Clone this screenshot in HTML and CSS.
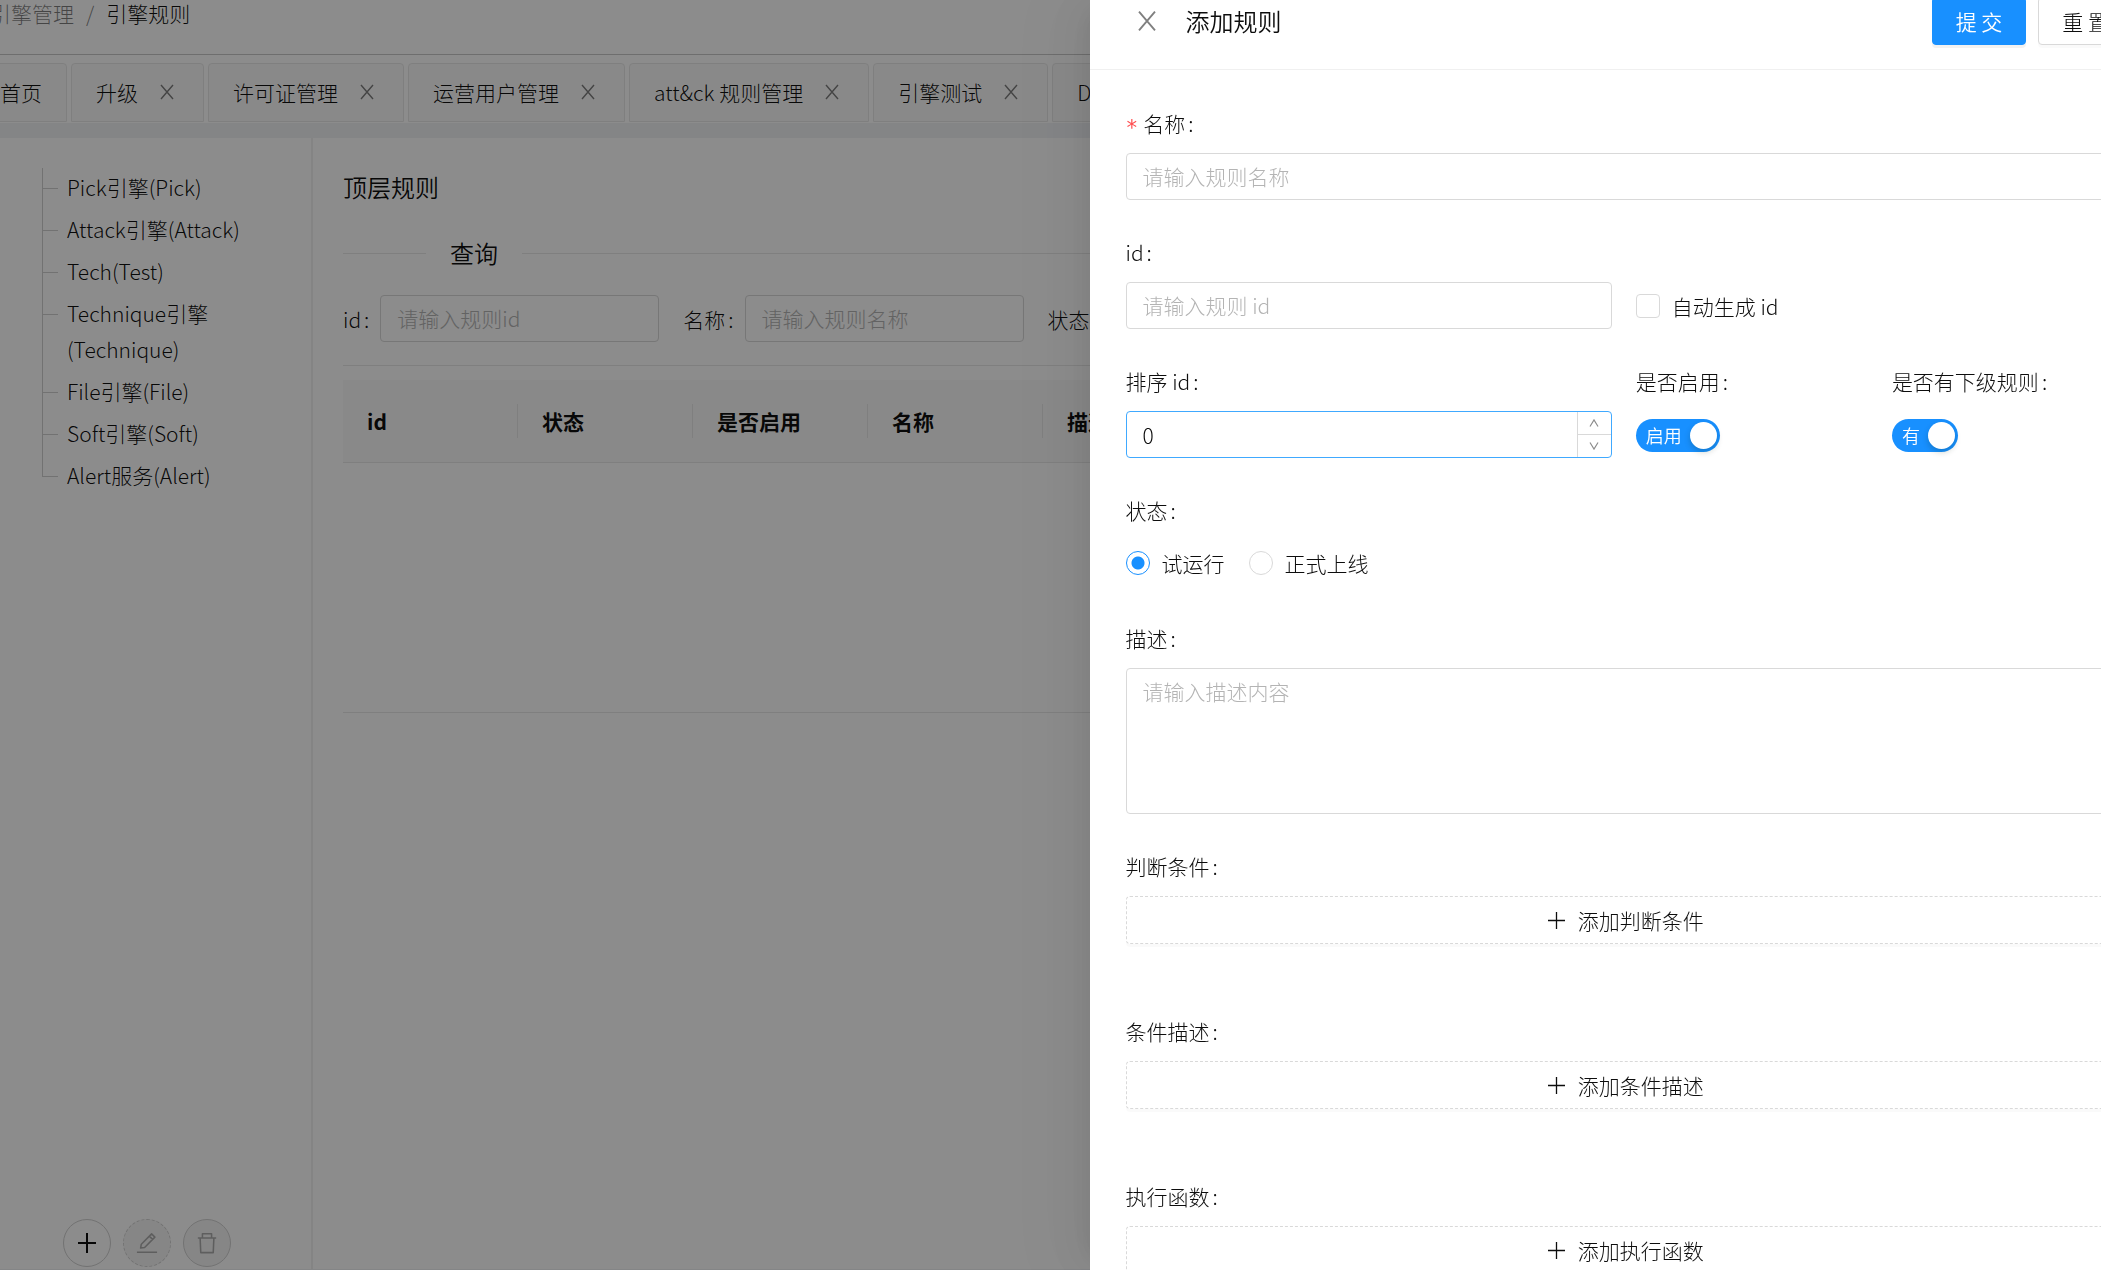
FILE: index.html
```html
<!DOCTYPE html>
<html lang="zh-CN">
<head>
<meta charset="utf-8">
<title>引擎规则</title>
<link rel="stylesheet" href="styles.css">
</head>
<body>
<svg class="sprite" aria-hidden="true">
  <symbol id="close" viewBox="0 0 18 18"><path d="M3 2 15 16M15 2 3 16" fill="none" stroke="currentColor" stroke-width="1.400"/></symbol>
  <symbol id="plus" viewBox="0 0 21 21"><path d="M10.5 2v17M2 10.5h17" fill="none" stroke="currentColor" stroke-width="1.300"/></symbol>
  <symbol id="plus-bold" viewBox="0 0 22 22"><path d="M11 1v20M2 11h18" fill="none" stroke="currentColor" stroke-width="2"/></symbol>
  <symbol id="edit" viewBox="0 0 24 24"><path d="M1 22h22M5 17.500l.8-4.200L17 2l3.600 3.600L9.400 16.900zM14.500 4.500l3.600 3.600" fill="none" stroke="currentColor" stroke-width="1.700" stroke-linejoin="round"/></symbol>
  <symbol id="trash" viewBox="0 0 24 24"><path d="M2 6.500h20M7 6.500V2h10v4.500M4.500 6.500l.7 16h13.600l.7-16" fill="none" stroke="currentColor" stroke-width="1.700" stroke-linejoin="round"/></symbol>
  <symbol id="up" viewBox="0 0 12 12"><path d="M2 9.500 6 3l4 6.500" fill="none" stroke="currentColor" stroke-width="1.200"/></symbol>
  <symbol id="down" viewBox="0 0 12 12"><path d="M2 2.500 6 9l4-6.500" fill="none" stroke="currentColor" stroke-width="1.200"/></symbol>
</svg>

<div class="page">
  <header class="topbar">
    <nav class="breadcrumb"><a href="#">引擎管理</a><span class="slash">/</span><span class="current">引擎规则</span></nav>
  </header>
  <nav class="tabs">
    <div class="tab"><a href="#">首页</a></div>
    <div class="tab"><a href="#">升级</a><button class="tab-close" aria-label="关闭"><svg><use href="#close"/></svg></button></div>
    <div class="tab"><a href="#">许可证管理</a><button class="tab-close" aria-label="关闭"><svg><use href="#close"/></svg></button></div>
    <div class="tab"><a href="#">运营用户管理</a><button class="tab-close" aria-label="关闭"><svg><use href="#close"/></svg></button></div>
    <div class="tab"><a href="#">att&amp;ck 规则管理</a><button class="tab-close" aria-label="关闭"><svg><use href="#close"/></svg></button></div>
    <div class="tab"><a href="#">引擎测试</a><button class="tab-close" aria-label="关闭"><svg><use href="#close"/></svg></button></div>
    <div class="tab"><a href="#">D</a></div>
  </nav>
  <div class="workspace">
    <aside class="sidebar">
      <ul class="tree">
        <li><a href="#">Pick引擎(Pick)</a></li>
        <li><a href="#">Attack引擎(Attack)</a></li>
        <li><a href="#">Tech(Test)</a></li>
        <li><a href="#">Technique引擎<br>(Technique)</a></li>
        <li><a href="#">File引擎(File)</a></li>
        <li><a href="#">Soft引擎(Soft)</a></li>
        <li><a href="#">Alert服务(Alert)</a></li>
      </ul>
      <div class="tree-actions">
        <button class="round" aria-label="新增"><svg><use href="#plus-bold"/></svg></button>
        <button class="round dashed" disabled aria-label="编辑"><svg><use href="#edit"/></svg></button>
        <button class="round" disabled aria-label="删除"><svg><use href="#trash"/></svg></button>
      </div>
    </aside>
    <main class="content">
      <h1 class="title">顶层规则</h1>
      <h2 class="divider">查询</h2>
      <form class="search">
        <label for="q-id">id<span class="colon">:</span></label>
        <input class="input" id="q-id" placeholder="请输入规则id">
        <label for="q-name">名称<span class="colon">:</span></label>
        <input class="input" id="q-name" placeholder="请输入规则名称">
        <label for="q-state">状态<span class="colon">:</span></label>
        <input class="input" id="q-state">
      </form>
      <table class="table">
        <thead><tr><th><span>id</span></th><th><span>状态</span></th><th><span>是否启用</span></th><th><span>名称</span></th><th><span>描述</span></th></tr></thead>
        <tbody><tr><td colspan="5"></td></tr></tbody>
      </table>
    </main>
  </div>
</div>

<div class="mask"></div>

<section class="drawer" role="dialog" aria-labelledby="drawer-title">
  <header class="drawer-head">
    <button class="drawer-close" aria-label="关闭"><svg><use href="#close"/></svg></button>
    <h2 id="drawer-title">添加规则</h2>
    <div class="drawer-buttons">
      <button class="btn primary">提 交</button>
      <button class="btn">重 置</button>
    </div>
  </header>
  <form class="form">
    <div class="item">
      <label class="label" for="name"><span class="star">*</span>名称<span class="colon">:</span></label>
      <input class="input" id="name" placeholder="请输入规则名称">
    </div>
    <div class="row">
      <div class="item">
        <label class="label" for="rule-id">id<span class="colon">:</span></label>
        <input class="input" id="rule-id" placeholder="请输入规则 id">
      </div>
      <div class="item wide">
        <label class="choice"><input type="checkbox">自动生成 id</label>
      </div>
    </div>
    <div class="row">
      <div class="item">
        <label class="label" for="order">排序 id<span class="colon">:</span></label>
        <div class="number">
          <input id="order" value="0" inputmode="numeric">
          <div class="steps">
            <button type="button" aria-label="增加"><svg><use href="#up"/></svg></button>
            <button type="button" aria-label="减少"><svg><use href="#down"/></svg></button>
          </div>
        </div>
      </div>
      <div class="item">
        <label class="label" for="enabled">是否启用<span class="colon">:</span></label>
        <div class="control"><button type="button" class="switch" id="enabled" role="switch" aria-checked="true">启用<span class="knob"></span></button></div>
      </div>
      <div class="item">
        <label class="label" for="children">是否有下级规则<span class="colon">:</span></label>
        <div class="control"><button type="button" class="switch" id="children" role="switch" aria-checked="true">有<span class="knob"></span></button></div>
      </div>
    </div>
    <div class="item" role="radiogroup" aria-labelledby="state-label">
      <span class="label" id="state-label">状态<span class="colon">:</span></span>
      <div class="radios">
        <label class="choice"><input type="radio" name="state" checked>试运行</label>
        <label class="choice"><input type="radio" name="state">正式上线</label>
      </div>
    </div>
    <div class="item">
      <label class="label" for="desc">描述<span class="colon">:</span></label>
      <textarea class="input area" id="desc" placeholder="请输入描述内容"></textarea>
    </div>
    <div class="item group">
      <label class="label" for="add-cond">判断条件<span class="colon">:</span></label>
      <button type="button" class="add" id="add-cond"><svg><use href="#plus"/></svg>添加判断条件</button>
    </div>
    <div class="item group">
      <label class="label" for="add-desc">条件描述<span class="colon">:</span></label>
      <button type="button" class="add" id="add-desc"><svg><use href="#plus"/></svg>添加条件描述</button>
    </div>
    <div class="item group">
      <label class="label" for="add-fn">执行函数<span class="colon">:</span></label>
      <button type="button" class="add" id="add-fn"><svg><use href="#plus"/></svg>添加执行函数</button>
    </div>
  </form>
</section>
</body>
</html>
```
FILE: styles.css
```css
* { box-sizing: border-box; }

body {
  margin: 0;
  height: 100vh;
  overflow: hidden;
  background: #f0f2f5;
  color: rgba(0, 0, 0, 0.95);
  font: 300 21px/36px "Noto Sans CJK SC", sans-serif;
}

button, input, textarea { font: inherit; color: inherit; }
button { padding: 0; border: 0; background: none; }
a { color: inherit; text-decoration: none; }
h1, h2 { margin: 0; font-size: 24px; font-weight: 350; }
svg { display: block; }
.sprite { position: absolute; width: 0; height: 0; }

.page { height: 100vh; display: flex; flex-direction: column; overflow: hidden; }

.topbar { height: 55px; flex: none; background: #fff; border-bottom: 1px solid #c8c8c8; }
.breadcrumb { display: flex; gap: 12px; margin-left: -10px; line-height: 27px; }
.breadcrumb a, .slash { color: rgba(0, 0, 0, 0.5); }

.tabs {
  display: flex;
  flex: none;
  gap: 4px;
  height: 68px;
  margin-bottom: 15px;
  margin-left: -25px;
  padding-top: 8px;
  background: #fff;
}
.tab {
  display: flex;
  flex: none;
  align-items: center;
  height: 59px;
  padding: 0 24px 2px;
  border: 1px solid #e8e8e8;
  border-radius: 4px 4px 0 0;
  background: #fafafa;
}
.tab-close { width: 18px; margin-left: 20px; margin-right: 3px; color: rgba(0, 0, 0, 0.5); }
.tab-close svg { width: 18px; height: 18px; }

.workspace { display: flex; flex: 1; min-height: 0; margin-bottom: 1px; background: #fff; }
.sidebar {
  display: flex;
  flex: none;
  flex-direction: column;
  justify-content: space-between;
  width: 313px;
  padding: 30px 24px 2px 42px;
  border-right: 2px solid #f0f0f0;
}
.tree { margin: 0; padding: 0; list-style: none; }
.tree li {
  display: flex;
  padding: 1px 0 5px;
  border-left: 1px solid #d0d0d0;
}
.tree li::before { content: ""; flex: none; width: 15px; height: 1px; margin: 19px 9px 0 0; background: #d0d0d0; }
.tree li:last-child {
  border-left-color: transparent;
  background: linear-gradient(#d0d0d0, #d0d0d0) 0 0 / 1px 21px no-repeat border-box;
}
.tree-actions { display: flex; gap: 12px; padding-left: 21px; }
.round {
  display: grid;
  place-items: center;
  width: 48px;
  height: 48px;
  border: 1px solid #d0d0d0;
  border-radius: 50%;
}
.round svg { width: 22px; height: 22px; }
.round:disabled { background: #f5f5f5; color: rgba(0, 0, 0, 0.3); }
.round.dashed { border-style: dashed; }

.content { flex: 1; min-width: 0; padding: 31px 30px 0; overflow: hidden; }
.title { line-height: 36px; }
.divider { display: flex; align-items: center; gap: 24px; margin-top: 30px; line-height: 36px; }
.divider::before, .divider::after { content: ""; height: 1px; background: #e8e8e8; width: 83px; }
.divider::after { flex: 1; }
.search {
  display: flex;
  align-items: center;
  margin-top: 24px;
  padding-bottom: 23px;
  border-bottom: 1px solid #e8e8e8;
}
.search label { flex: none; margin-right: 11px; }
.search .input { flex: none; width: 279px; margin-right: 24px; }
.colon { margin-left: 3px; }

.input {
  display: block;
  width: 100%;
  height: 47px;
  margin: 0;
  padding: 4px 16px 6px;
  border: 1px solid #d9d9d9;
  border-radius: 4px;
  background: #fff;
  outline: 0;
}
.input::placeholder { color: #b4b4b4; opacity: 1; }

.table { width: 100%; min-width: 876px; margin-top: 14px; border-collapse: collapse; table-layout: fixed; }
.table th {
  width: 175px;
  height: 82px;
  padding: 0;
  border-bottom: 1px solid #e8e8e8;
  background: #fafafa;
  font-weight: 700;
  text-align: left;
}
.table th:last-child { width: auto; }
.table th span { display: block; padding-left: 24px; line-height: 34px; border-right: 1px solid #e8e8e8; }
.table td { height: 250px; border-bottom: 1px solid #e8e8e8; }

.mask { position: fixed; inset: 0; background: rgba(0, 0, 0, 0.45); }

.drawer {
  position: fixed;
  top: 0;
  right: -59px;
  bottom: 0;
  width: calc(51% - 1px);
  overflow: hidden;
  background: #fff;
  box-shadow: -9px 0 24px -12px rgba(0, 0, 0, 0.08), -14px 0 42px rgba(0, 0, 0, 0.05), -18px 0 72px 24px rgba(0, 0, 0, 0.03);
}
.drawer-head {
  display: flex;
  align-items: center;
  height: 70px;
  padding: 0 27px 27px 36px;
  border-bottom: 1px solid #f0f0f0;
}
.drawer-close { width: 24px; margin: 0 27px 0 9px; color: rgba(0, 0, 0, 0.5); }
.drawer-close svg { width: 24px; height: 24px; }
.drawer-buttons { display: flex; gap: 12px; margin-left: auto; }
.btn {
  height: 48px;
  padding: 0 23px;
  border: 1px solid #d9d9d9;
  border-radius: 4px;
  background: #fff;
  box-shadow: 0 3px 0 rgba(0, 0, 0, 0.02);
}
.primary { border-color: #1890ff; background: #1890ff; color: #fff; font-weight: 350; box-shadow: 0 3px 0 rgba(0, 0, 0, 0.05); }

.form { padding: 36px 36px 0; }
.item { margin-bottom: 35px; }
.group { margin-bottom: 70px; }
.label { display: block; padding-bottom: 13px; line-height: 34px; }
.star { margin-right: 5px; color: #ff4d4f; font-family: "DejaVu Sans Mono", monospace; font-size: 21px; vertical-align: -3px; line-height: 1; }
.row { display: grid; grid-template-columns: calc(50% - 13px) 1fr 1fr; column-gap: 24px; }
.wide { grid-column: span 2; display: flex; align-items: flex-end; }
.control { display: flex; align-items: center; height: 47px; padding-top: 2px; }
.radios { display: flex; gap: 24px; height: 46px; }
.choice { display: flex; align-items: center; gap: 12px; height: 46px; }
.choice input {
  appearance: none;
  width: 24px;
  height: 24px;
  margin: 0;
  border: 1px solid #d9d9d9;
  border-radius: 4px;
  background: #fff;
}
.choice input[type="radio"] { border-radius: 50%; }
.choice input[type="radio"]:checked { border-color: #1890ff; background: radial-gradient(circle, #1890ff 6px, #fff 7px); }

.number { display: flex; height: 47px; border: 1px solid #40a9ff; border-radius: 4px; overflow: hidden; }
.number input { flex: 1; min-width: 0; padding: 0 16px; border: 0; outline: 0; background: none; }
.steps { display: flex; flex-direction: column; width: 34px; border-left: 1px solid #d9d9d9; }
.steps button { display: grid; flex: 1; place-items: center; color: rgba(0, 0, 0, 0.45); }
.steps button + button { border-top: 1px solid #d9d9d9; }
.steps svg { width: 12px; height: 12px; }

.switch {
  display: flex;
  align-items: center;
  gap: 8px;
  height: 33px;
  padding: 0 3px 0 10px;
  border-radius: 17px;
  background: #1890ff;
  color: #fff;
  font-size: 18px;
  font-weight: 350;
  line-height: 33px;
}
.knob { width: 27px; height: 27px; border-radius: 50%; background: #fff; box-shadow: 0 3px 6px rgba(0, 35, 11, 0.2); }

.area { height: 146px; resize: none; }
.add {
  display: flex;
  align-items: center;
  justify-content: center;
  gap: 11px;
  width: 100%;
  height: 48px;
  border: 1px dashed #d9d9d9;
  border-radius: 4px;
  box-shadow: 0 3px 0 rgba(0, 0, 0, 0.02);
}
.add svg { width: 21px; height: 21px; }
```
